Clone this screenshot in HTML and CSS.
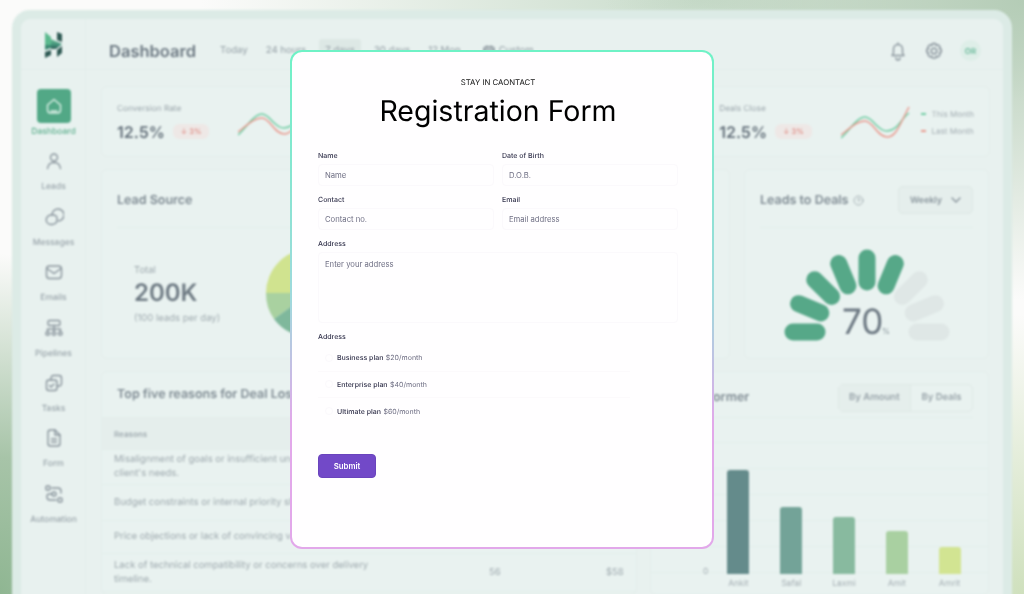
FILE: index.html
```html
<!DOCTYPE html>
<html lang="en">
<head>
<meta charset="utf-8">
<title>Registration Form</title>
<link rel="stylesheet" href="styles.css">
</head>
<body>
<div class="stage">
  <div class="frame" aria-hidden="true">
    <div class="panel">
      <aside class="sidebar">
        <div class="logo">
          <svg width="20" height="28" viewBox="0 0 20 28">
            <defs><linearGradient id="lg" x1="0" y1="0" x2="0" y2="1"><stop offset="0" stop-color="#6fbf96"/><stop offset="0.6" stop-color="#3f8f78"/><stop offset="1" stop-color="#2f5a54"/></linearGradient></defs>
            <path d="M1 1l6 5v8H1z" fill="#5bb98e"/>
            <path d="M7 14H1v5l6-2z" fill="#3d8a73"/>
            <path d="M1 21l6-2v5l-6 3z" fill="#2f5a54"/>
            <path d="M13 1l5 2v8l-5-2z" fill="#2f5a54"/>
            <path d="M7 8l11 5-6 5H7z" fill="url(#lg)"/>
            <path d="M13 19l5-4v7l-5 4z" fill="#2f5a54"/>
          </svg>
        </div>
        <nav class="nav">
          <div class="nav-item is-active">
            <span class="nav-icon"><svg width="20" height="20" viewBox="0 0 20 20"><path d="M3.5 9L10 3.5 16.500 9v5a3 3 0 0 1-3 3h-7a3 3 0 0 1-3-3z M7 15h6"/></svg></span>
            <span>Dashboard</span>
          </div>
          <div class="nav-item">
            <span class="nav-icon"><svg width="20" height="20" viewBox="0 0 20 20"><circle cx="10" cy="6.500" r="3.500"/><path d="M3.500 17.500c.5-4 3-6 6.500-6s6 2 6.500 6"/></svg></span>
            <span>Leads</span>
          </div>
          <div class="nav-item">
            <span class="nav-icon"><svg width="20" height="20" viewBox="0 0 20 20"><path d="M8 7.500A6 6 0 1 1 14.500 14"/><path d="M7.500 8H7a4.500 4.500 0 1 0 0 9.500h1.500l.5-.3A4.500 4.500 0 0 0 13 13v-1.500A3.500 3.500 0 0 0 9.500 8z"/></svg></span>
            <span>Messages</span>
          </div>
          <div class="nav-item">
            <span class="nav-icon"><svg width="20" height="20" viewBox="0 0 20 20"><rect x="2.500" y="4" width="15" height="12.500" rx="3"/><path d="M3 6.500l7 5 7-5"/></svg></span>
            <span>Emails</span>
          </div>
          <div class="nav-item">
            <span class="nav-icon"><svg width="20" height="20" viewBox="0 0 20 20"><rect x="4" y="2.500" width="12" height="5" rx="1.500"/><path d="M10 7.500v6M3.500 13.500V11h13v2.500"/><rect x="2" y="14" width="3.500" height="3" rx="1"/><rect x="8.200" y="14" width="3.500" height="3" rx="1"/><rect x="14.500" y="14" width="3.500" height="3" rx="1"/></svg></span>
            <span>Pipelines</span>
          </div>
          <div class="nav-item">
            <span class="nav-icon"><svg width="20" height="20" viewBox="0 0 20 20"><rect x="2.500" y="7" width="10.500" height="10.500" rx="2.500"/><path d="M7 7V5a2.500 2.500 0 0 1 2.500-2.500H15A2.500 2.500 0 0 1 17.500 5v5.500A2.500 2.500 0 0 1 15 13h-2"/><path d="M5.500 12.500l1.500 1.500 3-3"/></svg></span>
            <span>Tasks</span>
          </div>
          <div class="nav-item">
            <span class="nav-icon"><svg width="20" height="20" viewBox="0 0 20 20"><path d="M4 4.500A2.500 2.500 0 0 1 6.500 2H11l5 5v8.500a2.500 2.500 0 0 1-2.500 2.500h-7A2.500 2.500 0 0 1 4 15.500z"/><path d="M11 2v5h5M7.500 11h5M7.500 14h5"/></svg></span>
            <span>Form</span>
          </div>
          <div class="nav-item">
            <span class="nav-icon"><svg width="20" height="20" viewBox="0 0 20 20"><rect x="2" y="2" width="4" height="4" rx="1"/><rect x="14" y="14" width="4" height="4" rx="1"/><circle cx="10" cy="10" r="2"/><path d="M8 4h6a3 3 0 0 1 3 3v2M12 16H6a3 3 0 0 1-3-3v-1.500a2 2 0 0 1 2-1.500h3"/></svg></span>
            <span>Automation</span>
          </div>
        </nav>
      </aside>
      <main class="main">
        <header class="topbar">
          <h1 class="page-title">Dashboard</h1>
          <div class="ranges">
            <span>Today</span><span>24 hours</span><span class="range-active">7 days</span><span>30 days</span><span>12 Mon</span>
            <svg class="range-icon" width="12" height="12" viewBox="0 0 12 12"><rect x="1" y="2" width="10" height="9" rx="2"/><path d="M1 5h10M4 1v2M8 1v2"/></svg><span>Custom</span>
          </div>
          <div class="top-actions">
            <svg class="top-icon" width="20" height="20" viewBox="0 0 20 20"><path d="M4 14.500h12l-1.500-2.500V8a4.500 4.500 0 0 0-9 0v4zM8 17a2 2 0 0 0 4 0M10 2v1.500"/></svg>
            <svg class="top-icon" width="20" height="20" viewBox="0 0 20 20"><circle cx="10" cy="10" r="2.800"/><path d="M8.500 2.500h3l.5 2 2-.8 2.100 2.100-.8 2 2 .5v3l-2 .5.8 2-2.100 2.100-2-.8-.5 2h-3l-.5-2-2 .8-2.100-2.100.8-2-2-.5v-3l2-.5-.8-2L6 3.700l2 .8z"/></svg>
            <span class="avatar">OR</span>
          </div>
        </header>
        <div class="content">
          <section class="card stats">
            <div class="stat">
              <div class="stat-text">
                <div class="stat-label">Conversion Rate</div>
                <div class="stat-line"><b class="stat-value">12.5%</b><span class="pill">↓ 3%</span></div>
              </div>
              <svg class="spark" width="70" height="30" viewBox="0 0 70 30"><path class="spark-green" d="M0 27C8 20 16 6 24 6s12 14 22 14S60 8 68 2"/><path class="spark-red" d="M0 24C8 18 16 10 24 10s12 16 22 16S60 10 68 0"/></svg>
            </div>
            <div class="stat">
              <div class="stat-text">
                <div class="stat-label">Deals Close</div>
                <div class="stat-line"><b class="stat-value">12.5%</b><span class="pill">↓ 3%</span></div>
              </div>
              <svg class="spark" width="70" height="36" viewBox="0 0 70 36"><path class="spark-green" d="M0 33C8 26 16 12 24 12s12 14 22 14S60 14 68 8"/><path class="spark-red" d="M0 30C8 24 16 16 24 16s12 16 22 16S60 16 68 2"/></svg>
              <div class="legend">
                <div><i class="dash dash-green"></i>This Month</div>
                <div><i class="dash dash-red"></i>Last Month</div>
              </div>
            </div>
          </section>

          <div class="row-two">
            <section class="card">
              <div class="card-head"><h2 class="card-title">Lead Source</h2></div>
              <div class="lead-body">
                <div class="lead-text">
                  <div class="lead-small">Total</div>
                  <div class="lead-big">200K</div>
                  <div class="lead-small">(100 leads per day)</div>
                </div>
                <svg class="pie" width="92" height="92" viewBox="0 0 92 92">
                  <path d="M46 46L2 46A44 44 0 0 1 46 2z" fill="#d0e38f"/>
                  <path d="M46 46L2 46A44 44 0 0 0 10 72z" fill="#a9d1a0"/>
                  <path d="M46 46L10 72A44 44 0 0 0 46 90z" fill="#7fb89c"/>
                </svg>
              </div>
            </section>
            <section class="card">
              <div class="card-head">
                <h2 class="card-title">Leads to Deals</h2>
                <svg class="help" width="11" height="11" viewBox="0 0 11 11"><circle cx="5.500" cy="5.500" r="4.500"/><path d="M4.300 4.300a1.300 1.300 0 1 1 1.200 1.600v.6"/></svg>
                <div class="select">Weekly<svg width="10" height="6" viewBox="0 0 10 6"><path d="M1 1l4 4 4-4"/></svg></div>
              </div>
              <div class="gauge-wrap">
                <svg width="180" height="110" viewBox="-90 -90 180 110" class="gauge">
                  <line class="petal" x1="-74" y1="0" x2="-50" y2="0"/>
                  <line class="petal" x1="-68.400" y1="-28.300" x2="-46.200" y2="-19.100"/>
                  <line class="petal" x1="-52.300" y1="-52.300" x2="-35.400" y2="-35.400"/>
                  <line class="petal" x1="-28.300" y1="-68.400" x2="-19.100" y2="-46.200"/>
                  <line class="petal" x1="0" y1="-74" x2="0" y2="-50"/>
                  <line class="petal" x1="28.300" y1="-68.400" x2="19.100" y2="-46.200"/>
                  <line class="petal petal-off" x1="52.300" y1="-52.300" x2="35.400" y2="-35.400"/>
                  <line class="petal petal-off" x1="68.400" y1="-28.300" x2="46.200" y2="-19.100"/>
                  <line class="petal petal-off" x1="74" y1="0" x2="50" y2="0"/>
                  <text class="gauge-num" x="-25" y="2">70</text>
                  <text class="gauge-pct" x="15" y="2">%</text>
                </svg>
              </div>
            </section>
          </div>

          <div class="row-three">
            <section class="card">
              <div class="table-title"><h2 class="card-title">Top five reasons for Deal Loss</h2></div>
              <div class="t-row t-head"><span>Reasons</span><span>Deals</span><span>Amount</span></div>
              <div class="t-row t-35"><span>Misalignment of goals or insufficient understanding of the client's needs.</span><span>64</span><span>$72</span></div>
              <div class="t-row t-36"><span>Budget constraints or internal priority shifts.</span><span>60</span><span>$66</span></div>
              <div class="t-row t-33"><span>Price objections or lack of convincing value.</span><span>58</span><span>$61</span></div>
              <div class="t-row t-38"><span>Lack of technical compatibility or concerns over delivery timeline.</span><span>56</span><span>$58</span></div>
            </section>
            <section class="card">
              <div class="perf-head">
                <h2 class="card-title">Top Performer</h2>
                <div class="tabs"><span class="tab tab-active">By Amount</span><span class="tab">By Deals</span></div>
              </div>
              <div class="chart">
                <span class="axis-zero">0</span>
                <div class="bars">
                  <div class="bar-col"><i class="bar bar-1"></i><span>Ankit</span></div>
                  <div class="bar-col"><i class="bar bar-2"></i><span>Safal</span></div>
                  <div class="bar-col"><i class="bar bar-3"></i><span>Laxmi</span></div>
                  <div class="bar-col"><i class="bar bar-4"></i><span>Amit</span></div>
                  <div class="bar-col"><i class="bar bar-5"></i><span>Amrit</span></div>
                </div>
              </div>
            </section>
          </div>
        </div>
      </main>
    </div>
  </div>

  <div class="modal">
    <p class="eyebrow">STAY IN CAONTACT</p>
    <h2 class="modal-title">Registration Form</h2>
    <form class="form">
      <label class="field"><span class="field-label">Name</span><input class="input" type="text" placeholder="Name"></label>
      <label class="field"><span class="field-label">Date of Birth</span><input class="input" type="text" placeholder="D.O.B."></label>
      <label class="field"><span class="field-label">Contact</span><input class="input" type="text" placeholder="Contact no."></label>
      <label class="field"><span class="field-label">Email</span><input class="input" type="text" placeholder="Email address"></label>
      <label class="field field-wide"><span class="field-label">Address</span><textarea class="input textarea" placeholder="Enter your address"></textarea></label>
      <div class="field field-wide">
        <span class="field-label">Address</span>
        <div class="plans">
          <label class="plan"><input class="radio" type="radio" name="plan"><b>Business plan</b><span>$20/month</span></label>
          <label class="plan"><input class="radio" type="radio" name="plan"><b>Enterprise plan</b><span>$40/month</span></label>
          <label class="plan"><input class="radio" type="radio" name="plan"><b>Ultimate plan</b><span>$60/month</span></label>
        </div>
      </div>
      <div class="field-wide actions"><button class="submit" type="button">Submit</button></div>
    </form>
  </div>
</div>
</body>
</html>
```

FILE: styles.css
```css
* { box-sizing: border-box; }

html, body {
  margin: 0;
  height: 100%;
  overflow: hidden;
  font-family: Inter, "Liberation Sans", sans-serif;
  text-rendering: geometricPrecision;
}

.stage {
  position: relative;
  width: 1024px;
  height: 594px;
  overflow: hidden;
  padding: 10px 12px 0;
  background:
    radial-gradient(420px 300px at 100% 0, #b4ccb6 0, rgba(180, 204, 182, 0) 100%),
    radial-gradient(500px 130px at 700px 0, #c9dccb 0, rgba(201, 220, 203, 0) 100%),
    radial-gradient(200px 340px at 0 100%, #8fb692 0, #a7c4a8 40%, rgba(167, 196, 168, 0) 100%),
    radial-gradient(260px 280px at 100% 100%, #cfe0bd 0, rgba(207, 224, 189, 0) 100%),
    #fbfbfa;
}

/* Blurred dashboard behind the dialog */
.frame {
  height: 640px;
  border: 9px solid #dcebe6;
  border-radius: 18px;
  background: #e8f1ef;
  overflow: hidden;
  filter: blur(1.2px);
}

.panel {
  display: flex;
  height: 100%;
  color: #8a969d;
  font-size: 9px;
}

.sidebar {
  width: 65px;
  flex: none;
  border-right: 1px solid #e3eeeb;
}

.logo {
  height: 51px;
  padding: 12px 0 0 1px;
  display: flex;
  justify-content: center;
  border-bottom: 1px solid #e3eeeb;
}

.nav {
  display: grid;
  grid-auto-rows: 55.4px;
  padding: 19px 0 0 1px;
}

.nav-item {
  display: flex;
  flex-direction: column;
  align-items: center;
  gap: 4px;
  font-size: 8.5px;
  line-height: 11px;
  font-weight: 500;
  color: #9aa5ab;
}

.nav-icon {
  width: 34px;
  height: 34px;
  display: flex;
  align-items: center;
  justify-content: center;
  border-radius: 4px;
}

.nav-icon svg, .top-icon, .help, .select svg, .range-icon {
  fill: none;
  stroke: #89949c;
  stroke-width: 1.400;
  stroke-linecap: round;
  stroke-linejoin: round;
}

.is-active { color: #5fb08f; }
.is-active .nav-icon { background: #52a886; }
.is-active .nav-icon svg { stroke: #dff1e9; }

.main {
  flex: 1;
  min-width: 0;
}

.topbar {
  height: 51px;
  display: flex;
  align-items: center;
  padding: 13px 22px 0 23px;
  border-bottom: 1px solid #e3eeeb;
}

.page-title {
  margin: 0;
  width: 111px;
  font-size: 16.500px;
  font-weight: 600;
  color: #6c7882;
}

.ranges {
  display: flex;
  align-items: center;
  font-size: 9.500px;
  font-weight: 500;
  color: #a0abb0;
}

.ranges span { padding: 6px 18px 6px 0; white-space: nowrap; }
.ranges .range-active { padding: 6px 6px; margin: 0 13px 0 -5px; background: #dde8e5; border-radius: 3px; }
.range-icon { margin: 0 4px 0 4px; flex: none; }

.top-actions {
  margin-left: auto;
  display: flex;
  align-items: center;
  gap: 16px;
}

.avatar {
  width: 21px;
  height: 21px;
  border-radius: 50%;
  background: #deeee8;
  color: #66b898;
  font-size: 8px;
  font-weight: 600;
  display: flex;
  align-items: center;
  justify-content: center;
}

.content {
  display: flex;
  flex-direction: column;
  gap: 12px;
  padding: 16px 13px 0 15px;
}

.card {
  background: #e9f2f0;
  border: 1px solid #e3eeeb;
  border-radius: 6px;
}

.stats {
  height: 71px;
  display: flex;
  justify-content: space-between;
  padding: 2px 15px 0 15px;
  align-items: center;
}

.stat {
  display: flex;
  align-items: center;
}

.stat-label {
  font-size: 8.300px;
  line-height: 12px;
  color: #9aa5ab;
}

.stat-line {
  display: flex;
  align-items: center;
  gap: 8px;
  margin-top: 6px;
}

.stat-value {
  font-size: 16px;
  line-height: 22px;
  font-weight: 600;
  color: #66727c;
}

.pill {
  padding: 3px 8px;
  border-radius: 6px;
  background: #eee8e6;
  color: #e08a82;
  font-size: 7.500px;
  font-weight: 500;
}

.spark { margin-left: 29px; fill: none; stroke-width: 1.500; }
.spark-green { stroke: #71cda4; }
.spark-red { stroke: #e99a8f; }

.legend {
  margin: 0 0 0 10px;
  display: grid;
  gap: 6px;
  font-size: 8px;
  line-height: 11px;
  color: #a5afb4;
}

.dash {
  display: inline-block;
  width: 5px;
  height: 2px;
  margin-right: 6px;
  vertical-align: middle;
}

.dash-green { background: #71cda4; }
.dash-red { background: #e99a8f; }

.row-two {
  display: grid;
  grid-template-columns: 629px 245px;
  gap: 14px;
  height: 189px;
}

.card-head {
  height: 58px;
  margin: 0 15px;
  padding-top: 3px;
  display: flex;
  align-items: center;
  gap: 5px;
  border-bottom: 1px solid #e3eeeb;
}

.card-title {
  margin: 0;
  font-size: 12.500px;
  font-weight: 600;
  color: #7f8b93;
  white-space: nowrap;
}

.help { stroke: #a7b2b6; stroke-width: 1; }

.select {
  margin-left: auto;
  width: 75px;
  height: 28px;
  display: flex;
  align-items: center;
  justify-content: center;
  gap: 9px;
  border: 1px solid #dde8e5;
  border-radius: 5px;
  background: #e5eeec;
  font-size: 9px;
  font-weight: 600;
  color: #8a969d;
}

.lead-body {
  height: 130px;
  display: flex;
  align-items: center;
  padding: 4px 0 0 32px;
}

.lead-text { width: 130px; }
.pie { margin-top: -4px; }

.lead-small {
  font-size: 9.500px;
  line-height: 14px;
  color: #a0abb0;
}

.lead-big {
  margin: 0 0 4px;
  font-size: 24px;
  line-height: 30px;
  font-weight: 600;
  color: #6f7b84;
}

.gauge-wrap {
  display: flex;
  justify-content: center;
  padding: 14px 0 0 1px;
}

.petal {
  stroke: #56a888;
  stroke-width: 17;
  stroke-linecap: round;
}

.petal-off { stroke: #dfe7e6; }

.gauge-num {
  font-size: 35px;
  fill: #6c7882;
}

.gauge-pct {
  font-size: 8px;
  fill: #8a969d;
}

.row-three {
  display: grid;
  grid-template-columns: 536px 339px;
  gap: 13px;
  margin-top: 1px;
}

.table-title {
  height: 46px;
  padding: 0 15px;
  display: flex;
  align-items: center;
  border-bottom: 1px solid #e3eeeb;
}

.t-row {
  display: grid;
  grid-template-columns: 375px 117px 1fr;
  align-items: center;
  padding: 0 12px;
  font-size: 9.500px;
  line-height: 14px;
  color: #9ea9ae;
  border-bottom: 1px solid #e3eeeb;
}

.t-row span:first-child { padding-right: 112px; }

.t-head {
  height: 32px;
  background: #e5eeec;
  font-size: 8px;
  font-weight: 600;
  color: #a0abb0;
}

.t-33 { height: 33px; }
.t-35 { height: 35px; }
.t-36 { height: 36px; }
.t-38 { height: 38px; }

.perf-head {
  height: 46px;
  margin: 0 15px 0 11px;
  padding-top: 6px;
  display: flex;
  align-items: center;
  justify-content: space-between;
  border-bottom: 1px solid #e3eeeb;
}

.tabs {
  display: flex;
  height: 28px;
  border: 1px solid #dfe9e6;
  border-radius: 5px;
  font-size: 9.500px;
  font-weight: 600;
  color: #98a3a9;
}

.tab {
  display: flex;
  align-items: center;
  padding: 0 10.500px;
}

.tab-active {
  background: #e5eeec;
  border-right: 1px solid #dfe9e6;
}

.chart {
  display: flex;
  align-items: flex-end;
  height: 176px;
  padding-left: 52px;
  background: repeating-linear-gradient(to bottom, transparent 0, transparent 24px, #e3eeeb 24px, #e3eeeb 25px, transparent 25px, transparent 26px);
}

.axis-zero {
  width: 9px;
  margin-bottom: 17px;
  font-size: 8.500px;
  color: #a5afb4;
}

.bars {
  display: flex;
  align-items: flex-end;
}

.bar-col {
  width: 52.800px;
  display: flex;
  flex-direction: column;
  align-items: center;
  font-size: 8.500px;
  line-height: 20px;
  color: #a5afb4;
}

.bar {
  display: block;
  width: 22px;
  border-radius: 3px 3px 0 0;
}

.bar-1 { height: 104px; background: #648b8b; }
.bar-2 { height: 67px; background: #73a398; }
.bar-3 { height: 57px; background: #88ba9f; }
.bar-4 { height: 43px; background: #a9d0a1; }
.bar-5 { height: 27px; background: #d2e492; }

/* Dialog */
.modal {
  position: absolute;
  left: 290px;
  top: 50px;
  width: 424px;
  height: 499px;
  padding: 24px 34px 0 26px;
  border: 2px solid transparent;
  border-radius: 12px;
  background:
    linear-gradient(#fffeff, #fffeff) padding-box,
    linear-gradient(to bottom, #6ff2c6 0, #9fd9dc 50%, #e2a8ea 75%, #e2a8ea 100%) border-box;
  filter: blur(0.3px);
}

.eyebrow {
  margin: 0;
  text-align: center;
  font-size: 7.800px;
  line-height: 12px;
  color: #111;
}

.modal-title {
  margin: 5px 0 21px;
  text-align: center;
  font-size: 28.500px;
  line-height: 36px;
  font-weight: 400;
  color: #000;
}

.form {
  display: grid;
  grid-template-columns: 176px 176px;
  gap: 8px;
}

.field {
  display: flex;
  flex-direction: column;
  gap: 3px;
}

.field-wide { grid-column: 1 / -1; }

.field-label {
  font-size: 7px;
  line-height: 11px;
  font-weight: 500;
  color: #33334c;
}

.input {
  width: 100%;
  height: 22px;
  padding: 0 6px;
  border: 1px solid #fbf9fc;
  border-radius: 4px;
  outline: none;
  background: #fffeff;
  font: 400 7.700px Inter, "Liberation Sans", sans-serif;
  color: #6b6b80;
}

.input::placeholder { color: #6f6f84; opacity: 1; }

.textarea {
  display: block;
  height: 71px;
  padding: 7px 6px;
  resize: none;
}

.plans { display: grid; }

.plan {
  width: 312px;
  height: 26.500px;
  display: flex;
  align-items: center;
  gap: 2.500px;
  padding-left: 7px;
  border-bottom: 1px solid #fcfafc;
  font-size: 7px;
  color: #6b6b80;
}

.plan:last-child { border-bottom: 0; }

.plan b {
  font-weight: 500;
  color: #33334c;
}

.radio {
  appearance: none;
  width: 8px;
  height: 8px;
  margin: 0 1.500px 0 0;
  border: 1px solid #fbf9fc;
  border-radius: 50%;
}

.actions { padding-top: 20px; }

.submit {
  width: 58px;
  height: 24px;
  padding: 0;
  border: 1px solid #6a44bd;
  border-radius: 4px;
  background: #7249c8;
  color: #fff;
  font: 600 7.800px Inter, "Liberation Sans", sans-serif;
}
```
